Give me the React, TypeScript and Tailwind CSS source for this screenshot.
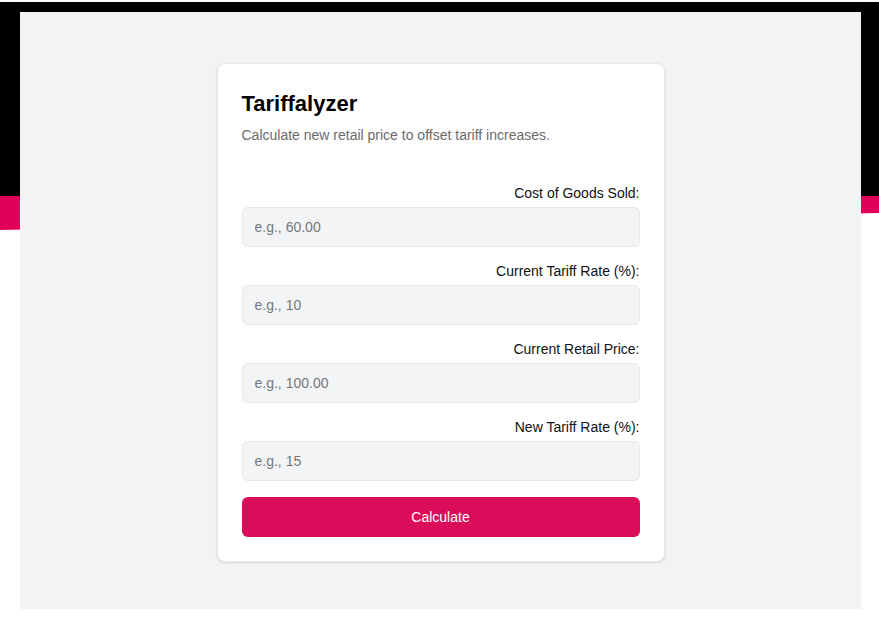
import React from "react";

const fields = [
  { label: "Cost of Goods Sold:", placeholder: "e.g., 60.00" },
  { label: "Current Tariff Rate (%):", placeholder: "e.g., 10" },
  { label: "Current Retail Price:", placeholder: "e.g., 100.00" },
  { label: "New Tariff Rate (%):", placeholder: "e.g., 15" },
];

export default function App() {
  return (
    <div
      className="relative h-[626px] w-full overflow-hidden bg-white"
      style={{ fontFamily: '"Liberation Sans", Arial, sans-serif' }}
    >
      <div className="absolute inset-x-0 top-[2px] h-[194px] bg-black" />
      <div className="absolute inset-x-0 top-[196px] h-[34px] bg-[#e0005a] [clip-path:polygon(0_0,100%_0,100%_17px,0_34px)]" />
      <div className="relative ml-[20px] mt-[12px] h-[597px] w-[841px] bg-[#f2f3f5] pt-[51px]">
        <div className="mx-auto w-[448px] rounded-lg border border-gray-200 bg-white p-6 shadow-sm">
          <h1 className="text-[22px] font-bold leading-8 text-black">Tariffalyzer</h1>
          <p className="mt-[5px] text-sm leading-5 text-[#6b6b6b]">
            Calculate new retail price to offset tariff increases.
          </p>
          <form className="mt-[38px] flex flex-col" onSubmit={(e) => e.preventDefault()}>
            {fields.map((f) => (
              <div key={f.label} className="mb-[14px]">
                <label className="mb-1 block text-right text-sm leading-5 text-[#111]">
                  {f.label}
                </label>
                <input
                  type="text"
                  placeholder={f.placeholder}
                  className="box-border block h-10 w-full rounded-md border border-gray-200 bg-gray-100 px-3 text-sm text-gray-900 placeholder:text-[#777] outline-none"
                />
              </div>
            ))}
            <button
              type="submit"
              className="mt-[2px] block h-10 w-full rounded-md bg-[#db0d5b] text-sm text-white"
            >
              Calculate
            </button>
          </form>
        </div>
      </div>
    </div>
  );
}
